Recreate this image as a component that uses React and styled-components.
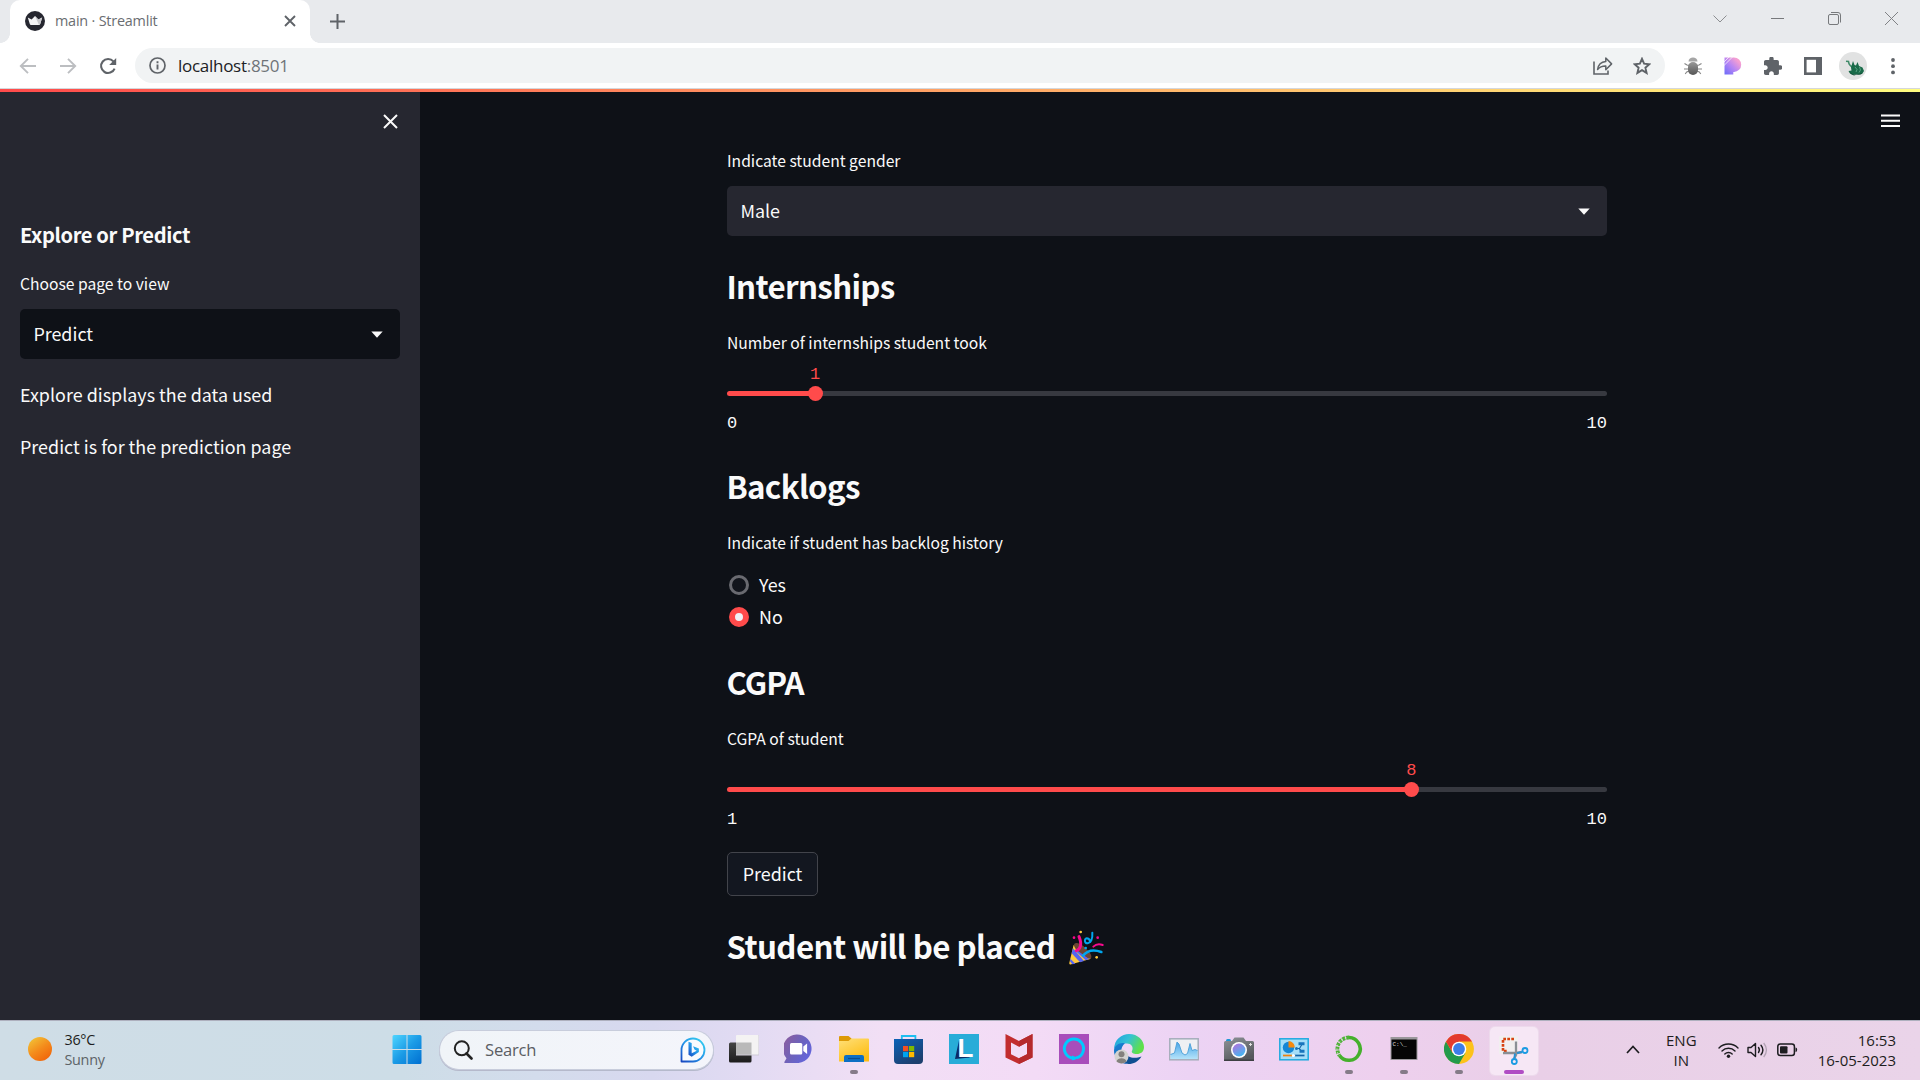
import React from "react";
import styled, { createGlobalStyle } from "styled-components";

const SOURCE = '"Noto Sans CJK SC", "Open Sans", sans-serif';
const SYSTEM = '"Open Sans", "Noto Sans", sans-serif';
const CODE = '"Liberation Mono", monospace';

const Global = createGlobalStyle`
  * { box-sizing: border-box; }
  body { margin: 0; background: #0e1117; overflow: hidden; }
  svg { display: block; flex: none; }
  h1, h2, h3, p { margin: 0; }
`;

const Screen = styled.div`
  width: 1920px;
  height: 1080px;
  display: flex;
  flex-direction: column;
  font-family: ${SYSTEM};
`;

/* ---------- browser chrome ---------- */
const TabStrip = styled.header`
  height: 43px;
  flex: none;
  background: #e8eaed;
  display: flex;
  align-items: stretch;
`;
const Flare = styled.div`
  width: 10px;
  background: radial-gradient(circle at ${(p) => (p.$right ? "100%" : "0")} 0, #e8eaed 9.6px, #fff 10.2px) bottom / 10px 10px no-repeat;
`;
const Tab = styled.div`
  width: 300px;
  background: #fff;
  border-radius: 10px 10px 0 0;
  display: flex;
  align-items: center;
  padding: 0 14px 0 15px;
  height: 43px;
`;
const TabTitle = styled.span`
  flex: 1;
  margin: -2px 0 0 10px;
  font-size: 14.4px;
  line-height: 20px;
  letter-spacing: -0.2px;
  color: #6a6d71;
`;
const TabIcon = styled.div`
  margin-top: -1px;
`;
const NewTab = styled.div`
  padding: 14px 0 0 10px;
  flex: 1;
`;
const WindowButtons = styled.div`
  display: flex;
  padding-right: 0;
`;
const WindowButton = styled.div`
  width: 57.2px;
  height: 37px;
  display: grid;
  place-items: center;
`;
const Toolbar = styled.div`
  height: 46px;
  flex: none;
  background: #fff;
  border-bottom: 1px solid #d5d7db;
  display: flex;
  align-items: center;
`;
const NavButtons = styled.nav`
  display: flex;
  padding-left: 7.5px;
  width: 135px;
`;
const NavButton = styled.div`
  width: 40px;
  display: grid;
  place-items: center;
`;
const Omnibox = styled.div`
  width: 1530px;
  height: 35px;
  border-radius: 18px;
  background: #f1f3f4;
  display: flex;
  align-items: center;
  padding: 0 14px 0 14px;
`;
const Url = styled.span`
  flex: 1;
  margin-left: 12px;
  font-size: 17px;
  line-height: 24px;
  letter-spacing: -0.28px;
  color: #202124;
`;
const Port = styled.span`
  color: #6f7378;
`;
const OmniActions = styled.div`
  display: flex;
  align-items: center;
  gap: 20px;
`;
const Extensions = styled.div`
  display: flex;
  padding-left: 8px;
`;
const Extension = styled.div`
  width: 40px;
  display: grid;
  place-items: center;
`;

/* ---------- application ---------- */
const Decoration = styled.div`
  height: 3px;
  flex: none;
  background: linear-gradient(90deg, #ff4b4b, #fffd80);
`;
const AppBody = styled.div`
  height: 928px;
  flex: none;
  display: flex;
  background: #0e1117;
  color: #fafafa;
  font-family: ${SOURCE};
`;
const Sidebar = styled.aside`
  width: 420px;
  background: #262730;
  padding: 22px 20px 0;
  display: flex;
  flex-direction: column;
`;
const CloseRow = styled.div`
  display: flex;
  justify-content: flex-end;
  padding-right: 2px;
  height: 106px;
`;
const SideTitle = styled.h3`
  font-size: 20.1px;
  font-weight: 700;
  line-height: 29px;
  letter-spacing: -0.37px;
  margin-bottom: 23px;
`;
const Label = styled.div`
  font-size: 15.67px;
  line-height: 23px;
  white-space: nowrap;
`;
const SelectBox = styled.div`
  height: 50px;
  margin-top: ${(p) => p.$gap}px;
  border-radius: 5px;
  background: ${(p) => p.$bg};
  display: flex;
  align-items: center;
  justify-content: space-between;
  padding: 0 17.5px 0 13.4px;
`;
const Body = styled.span`
  font-size: 17.9px;
  line-height: 26px;
  padding-bottom: 2px;
`;
const Paragraph = styled.p`
  font-size: 17.9px;
  line-height: 26px;
  letter-spacing: 0.015px;
  margin-top: ${(p) => p.$gap}px;
`;
const Main = styled.main`
  flex: 1;
  display: flex;
  justify-content: space-between;
  padding: 22px 20px 0 307px;
`;
const Form = styled.section`
  width: 880px;
  padding-top: 35px;
`;
const Heading = styled.h2`
  display: flex;
  font-size: 31.3px;
  font-weight: 700;
  line-height: 45px;
  letter-spacing: ${(p) => p.$ls}px;
  margin-top: ${(p) => p.$gap}px;
  margin-left: -0.6px;
  margin-bottom: ${(p) => p.$after || 0}px;
`;
const SliderBox = styled.div`
  height: 79px;
  padding-top: 10px;
  font-family: ${CODE};
  font-size: 17px;
  line-height: 20px;
`;
const Rail = styled.div`
  height: 5px;
  margin-top: 27px;
  border-radius: 3px;
  background: linear-gradient(90deg, #ff4b4b ${(p) => p.$pct}%, #373940 ${(p) => p.$pct}%);
  position: relative;
`;
const Thumb = styled.div`
  position: absolute;
  left: ${(p) => p.$pct}%;
  top: -5px;
  width: 15px;
  height: 15px;
  margin-left: -7.5px;
  border-radius: 50%;
  background: #ff4b4b;
`;
const ThumbValue = styled.div`
  position: absolute;
  left: 50%;
  bottom: 16px;
  transform: translateX(-50%);
  color: #ff4b4b;
`;
const Ticks = styled.div`
  display: flex;
  justify-content: space-between;
  margin-top: 18px;
`;
const Radios = styled.div`
  padding-top: 15px;
`;
const RadioRow = styled.div`
  height: 32px;
  display: flex;
  align-items: center;
  padding-left: 2px;
  gap: 10px;
`;
const Dot = styled.div`
  width: 20px;
  height: 20px;
  border-radius: 50%;
  border: ${(p) => (p.$on ? "6px solid #ff4b4b" : "3px solid #696a70")};
  background: ${(p) => (p.$on ? "#f0f2f6" : "#12151c")};
`;
const Button = styled.div`
  width: 91px;
  height: 44px;
  margin-top: 23px;
  border: 1px solid #42444b;
  border-radius: 5px;
  background: #131720;
  display: flex;
  align-items: center;
  justify-content: center;
`;
const Party = styled.div`
  padding: 7px 0 0 14px;
`;

/* ---------- taskbar ---------- */
const Taskbar = styled.footer`
  height: 60px;
  flex: none;
  border-top: 1px solid #aeb0be;
  background: linear-gradient(92deg, #cfdde6 0, #cddde7 21%, #d3dcec 28%, #d8d8ef 34%, #e2dbf3 39%, #f2dff5 46%, #f3dbf6 54%, #ecd3f4 62%, #eed0ee 72%, #e9cfe7 80%, #ead4e9 100%);
  display: flex;
  align-items: center;
`;
const Weather = styled.div`
  width: 379px;
  display: flex;
  align-items: center;
  padding-left: 28px;
  gap: 12.5px;
`;
const Sun = styled.div`
  width: 24px;
  height: 24px;
  border-radius: 50%;
  margin-top: -3px;
  background: linear-gradient(145deg, #f2bf35 10%, #f48b1b 50%, #f0640a 90%);
`;
const Lines = styled.div`
  display: flex;
  flex-direction: column;
  align-items: ${(p) => p.$align || "flex-start"};
  font-size: ${(p) => p.$size || 14.4}px;
  line-height: 20px;
  letter-spacing: ${(p) => p.$ls || 0}px;
  color: #1d1d20;
  padding-bottom: 2px;
`;
const Soft = styled.span`
  color: #5d6367;
`;
const Cell = styled.div`
  width: 55px;
  height: 48px;
  display: flex;
  flex-direction: column;
  align-items: center;
  padding-top: ${(p) => (p.$tile ? 8 : 7)}px;
  padding-bottom: 0;
  gap: ${(p) => (p.$tile ? 5 : 6)}px;
`;
const Tile = styled(Cell)`
  width: 48px;
  margin-left: 4px;
  border-radius: 5px;
  background: #f6e7f5;
  box-shadow: 0 0 0 1px #eddaec;
`;
const Running = styled.div`
  width: ${(p) => (p.$active ? 20 : 8)}px;
  height: 4px;
  border-radius: 2px;
  background: ${(p) => (p.$active ? "#b04cc4" : "#857b88")};
`;
const Search = styled.div`
  width: 273px;
  height: 38px;
  margin: 0 3px 1px 6px;
  border-radius: 20px;
  background: linear-gradient(90deg, #f0f4f8, #f4f5fb);
  box-shadow: 0 0 0 1px #c8cddc, 0 1px 0 1px #b5b9cb;
  display: flex;
  align-items: center;
  padding: 0 7px 0 13px;
`;
const SearchText = styled.span`
  flex: 1;
  margin-left: 12px;
  font-size: 16.6px;
  line-height: 24px;
  letter-spacing: -0.2px;
  color: #5b5d63;
`;
const Tray = styled.div`
  flex: 1;
  display: flex;
  align-items: center;
  padding-right: 24px;
`;
const Chevron = styled.div`
  margin: 0 26px 2px 88px;
`;
const StatusIcons = styled.div`
  display: flex;
  align-items: center;
  gap: 8px;
  margin: 0 0 2px 21px;
  flex: 1;
`;

/* ---------- icons ---------- */
const S = ({ w = 30, h = w, vb, children, ...p }) => (
  <svg width={w} height={h} viewBox={vb || `0 0 ${w} ${h}`} fill="none" {...p}>{children}</svg>
);

const Crown = () => (
  <S w={20}>
    <circle cx="10" cy="10" r="10" fill="#262730" />
    <path d="M2.8 6.500 6.600 8.500 10 5 13.400 8.500l3.800-2-2 6.500c-.2.700-.6 1-1.200 1H6c-.6 0-1-.3-1.200-1z" fill="#f4f4f6" />
    <path d="M10 5 13.400 8.500l3.800-2-2 6.500c-.2.700-.6 1-1.200 1z" fill="#c9c9cd" />
  </S>
);
const X = ({ w, c, t }) => (
  <S w={w}><path d={`M1 1 ${w - 1} ${w - 1}M${w - 1} 1 1 ${w - 1}`} stroke={c} strokeWidth={t} /></S>
);
const Arrow = ({ flip }) => (
  <S w={18}>
    <path d={flip ? "M1 9h15M9 1.800 16.200 9 9 16.200" : "M17 9H2M9 1.800 1.800 9 9 16.200"} stroke="#bcbec1" strokeWidth="1.900" />
  </S>
);
const Reload = () => (
  <S w={18}>
    <path d="M15.600 11.600A7 7 0 1 1 14.400 4.400L16 6" stroke="#5f6368" strokeWidth="2.100" />
    <path d="M17.200 1v7h-7z" fill="#5f6368" />
  </S>
);
const Info = () => (
  <S w={17}>
    <circle cx="8.500" cy="8.500" r="7.500" stroke="#5f6368" strokeWidth="1.700" />
    <path d="M8.500 7.600v5M8.500 4.300v2" stroke="#5f6368" strokeWidth="1.900" />
  </S>
);
const Share = () => (
  <S w={20}>
    <path d="M1 5.500V18h14v-3.400" stroke="#5f6368" strokeWidth="1.600" />
    <path d="M12.800 2v3.600C8 6 5.200 9 4.600 13.600c2-2.500 4.500-3.600 8.200-3.500v3.700l5.800-5.900z" stroke="#5f6368" strokeWidth="1.500" strokeLinejoin="round" />
  </S>
);
const Star = () => (
  <S w={18}>
    <path d="m9 1.800 2.100 4.900 5.300.5-4 3.500 1.200 5.200L9 13.100l-4.600 2.800 1.200-5.200-4-3.500 5.300-.5z" stroke="#5f6368" strokeWidth="1.900" />
  </S>
);
const Bug = () => (
  <S w={18}>
    <defs><linearGradient id="bug" x2="0" y2="1"><stop stopColor="#999" /><stop offset="1" stopColor="#555" /></linearGradient></defs>
    <path d="M.5 6.500 3 8l2 .4M0 12h5M1.200 17l1.500-2 2.500-1M17.500 6.500 15 8l-2 .4M18 12h-5M16.800 17l-1.500-2-2.500-1" stroke="#858585" strokeWidth="1.100" />
    <path d="M4.500 4.600C4.500-1 13.500-1 13.500 4.600z" fill="#a5a5a5" />
    <rect x="4" y="5" width="10" height="13" rx="5" fill="url(#bug)" />
  </S>
);
const PinkP = () => (
  <S w={18}>
    <defs><linearGradient id="pp" x1="1" y1="0" x2="0" y2="1"><stop offset=".2" stopColor="#f59fd2" /><stop offset=".55" stopColor="#b685f5" /><stop offset="1" stopColor="#6a6cf8" /></linearGradient></defs>
    <path d="M.5.500h9.500a7.200 7.200 0 0 1 0 14.400H9.300V17.500H.5z" fill="url(#pp)" />
    <path d="M-.5 5.500 5.500-.5M-.5 9 8.500 0" stroke="#fff" strokeWidth="1" opacity=".7" />
  </S>
);
const Puzzle = () => (
  <S w={18} vb="2 1.500 20.500 20.500">
    <path d="M20.500 11H19V7c0-1.100-.9-2-2-2h-4V3.500a2.500 2.500 0 0 0-5 0V5H4c-1.100 0-1.990.9-1.990 2v3.800H3.500c1.490 0 2.700 1.210 2.700 2.700s-1.210 2.700-2.700 2.700H2V20c0 1.100.9 2 2 2h3.800v-1.500c0-1.490 1.210-2.700 2.700-2.700s2.700 1.210 2.700 2.700V22H17c1.100 0 2-.9 2-2v-4h1.500a2.500 2.500 0 0 0 0-5z" fill="#5f6368" />
  </S>
);
const Panel = () => (
  <S w={18}><rect width="18" height="18" fill="#5f6368" /><rect x="2.600" y="2.800" width="9.400" height="12.600" fill="#fff" /></S>
);
const Avatar = () => (
  <S w={28}>
    <circle cx="14" cy="14" r="14" fill="#e1e2e2" />
    <path d="M7 9.200l2.500.3c.3 2.500 1.500 4.500 4 5.500" stroke="#3f8a68" strokeWidth="1.600" />
    <path d="m12 15.500 2-6.500 1.500 4 1.500.500 1.500-3.500 1.500 4 3.500 1.500 1.500 3.500-2 3-3.500.5-3-.5-2.500 1-3-1.500-1.500-2.500 3-.5z" fill="#1a6b4a" />
    <path d="m16 15 2 2.500-1 2.500M20.500 15l1 3-1.500 2.500" stroke="#6bb392" strokeWidth=".8" />
    <path d="m10 19.500 4 3 6-.5 4-1.500-2.500 2-4 .3-2.500.7-3-1.500z" fill="#0e4a33" />
  </S>
);
const Dots = () => (
  <S w={4} h={18}><g fill="#5f6368"><circle cx="2" cy="3" r="1.900" /><circle cx="2" cy="9.200" r="1.900" /><circle cx="2" cy="15.400" r="1.900" /></g></S>
);
const Caret = () => <S w={12} h={7}><path d="M.3.500h11.400L6 6.800z" fill="#fafafa" /></S>;

const PartyIcon = () => (
  <S w={35} vb="0 0 105 105">
    <path d="M15 46c0-12 18-7 31 5s27 27 19 35c-8 6-23-1-36-13S15 58 15 46z" fill="#6d4534" />
    <path d="M14 44 1 98c-1 4 2 6 6 5l59-17C51 88 19 64 14 44z" fill="#ffc83d" />
    <path d="m12 55 33 38-12 4L8 70zM4 86l15 15-9 2-7-9zM24 61l36 26-10 4-31-29z" fill="#5565f0" />
    <path d="M22 62c12-4 18-18 8-42" stroke="#f70a8d" strokeWidth="9" strokeLinecap="round" />
    <path d="M42 77C55 61 75 58 97 66" stroke="#00a6ed" strokeWidth="8" strokeLinecap="round" />
    <path d="M73 50q12-12 28-5" stroke="#f70a8d" strokeWidth="6" strokeLinecap="round" />
    <path d="M70 8c1 18-5 30-14 32-10 1-11-14-3-15 8 0 10 7 11 11" stroke="#00a6ed" strokeWidth="6" strokeLinecap="round" />
    <circle cx="50" cy="54" r="4" fill="#00a6ed" />
    <g fill="#f70a8d"><circle cx="15" cy="23" r="4" /><circle cx="86" cy="23" r="4" /></g>
    <g fill="#ffc83d"><circle cx="35" cy="6" r="4" /><circle cx="83" cy="82" r="4" /></g>
  </S>
);

const Windows = () => (
  <S>
    <defs><linearGradient id="win" x2="1" y2="1"><stop stopColor="#4fd5ff" /><stop offset=".5" stopColor="#1b9be6" /><stop offset="1" stopColor="#006fd1" /></linearGradient></defs>
    <path d="M2 1h12.500v14H.5V2.500Q.5 1 2 1zM15.500 1H28q1.500 0 1.500 1.500V15h-14zM.5 16h14v14H2q-1.500 0-1.500-1.500zM15.500 16h14v12.500Q29.500 30 28 30H15.500z" fill="url(#win)" />
  </S>
);
const Magnifier = () => (
  <S w={20}><circle cx="8.800" cy="8.300" r="7" stroke="#222" strokeWidth="2" /><path d="m13.500 13.500 5 5" stroke="#222" strokeWidth="2.600" strokeLinecap="round" /></S>
);
const Bing = () => (
  <S w={26}>
    <defs><linearGradient id="bing" x1="0" y1="1" x2=".9" y2="0"><stop stopColor="#1746c0" /><stop offset=".5" stopColor="#2493e8" /><stop offset="1" stopColor="#35d0f0" /></linearGradient></defs>
    <path d="M1.500 24.500V13A11.500 11.500 0 1 1 13 24.500z" stroke="url(#bing)" strokeWidth="1.800" fill="#f9fbfe" strokeLinejoin="round" />
    <path d="m8.500 4.800 3.200 1.300v10.100l5-2.500-2.200-1.300-1.400-3.200 5.800 2.300v3.600l-7.200 4.600-3.200-1.900z" fill="url(#bing)" />
  </S>
);
const TaskView = () => (
  <S>
    <defs><linearGradient id="tv" x2="0" y2="1"><stop stopColor="#454545" /><stop offset="1" stopColor="#1c1c1c" /></linearGradient></defs>
    <rect x="0" y="8.500" width="22.500" height="20" rx="1.500" fill="url(#tv)" />
    <rect x="7" y="1" width="23" height="20" rx="1" fill="#f4f3f3" />
    <path d="M7 8.500h15.500V21H7z" fill="#b9b9b9" />
    <path d="M7 21h23V1" stroke="#cfcbd6" />
  </S>
);
const Chat = () => (
  <S>
    <defs><linearGradient id="chat" x1="0" y1=".2" x2="1" y2=".8"><stop stopColor="#8b5da0" /><stop offset=".5" stopColor="#6c63bd" /><stop offset="1" stopColor="#6265e0" /></linearGradient></defs>
    <path d="M1 29c-.8 0-1-.8-.5-1.300l2-3.500A14.300 14.300 0 1 1 14.500 29z" fill="url(#chat)" />
    <rect x="6" y="9" width="12.300" height="11.500" rx="1.500" fill="#fff" /><path d="m19.300 12.500 3.800-3v10.500l-3.800-3z" fill="#fff" />
  </S>
);
const Folder = () => (
  <S>
    <defs><linearGradient id="fo" x2=".6" y2="1"><stop stopColor="#ffe07a" /><stop offset="1" stopColor="#fdbd13" /></linearGradient></defs>
    <path d="M0 3q0-1 1-1h8.500l3 2.500V9H0z" fill="#dd9a06" />
    <path d="M0 7h9.500l3-2.500H29q1 0 1 1v22H0z" fill="url(#fo)" />
    <path d="M5 28v-5q0-2 2-2h16q2 0 2 2v5z" fill="#0c6fc4" /><path d="M9 24.500h12" stroke="#084d91" strokeWidth="1.200" />
  </S>
);
const Store = () => (
  <S>
    <defs><linearGradient id="st" x2=".6" y2="1"><stop stopColor="#0b62b8" /><stop offset="1" stopColor="#1d3f6e" /></linearGradient></defs>
    <path d="M7.800 7V2h13.600v5" stroke="#1ebef0" strokeWidth="1.800" />
    <path d="M0 5h29v21q0 4-4 4H4q-4 0-4-4z" fill="url(#st)" />
    <path d="M9 12h5.200v5.200H9z" fill="#f25022" /><path d="M15 12h5.200v5.200H15z" fill="#7fba00" /><path d="M9 18h5.200v5.200H9z" fill="#00a4ef" /><path d="M15 18h5.200v5.200H15z" fill="#ffb900" />
  </S>
);
const Lenovo = () => (
  <S>
    <rect width="30" height="30" fill="#28acd8" />
    <path d="M10.500 4 6 25l15-1.500-9-5z" fill="#0b2a66" />
    <text x="8.500" y="23" fontFamily="Liberation Sans, sans-serif" fontWeight="700" fontSize="26" fill="#fff">L</text>
  </S>
);
const McAfee = () => (
  <S><path d="M1.500 0 15 7 28.500 0v23.500L15 30 1.500 23.500zM7 8.500v11.700l8 4 8-4V8.500l-8 4.300z" fill="#c22d2f" fillRule="evenodd" /><path d="M15 7 28.500 0v23.500L15 30v-5.800l8-4V8.500l-8 4.300z" fill="#b52a2d" /></S>
);
const Alexa = () => (
  <S><rect width="30" height="30" fill="#a84dbb" /><path d="M14 24.200a9.600 9.600 0 1 1 3.500-.3" stroke="#00caff" strokeWidth="3" /><path d="M13 21.500v4.800c3 0 6-1.800 7.500-4-2 .8-5 .8-7.500-.8z" fill="#00caff" /></S>
);
const Edge = () => (
  <S>
    <defs>
      <linearGradient id="e1" x2="1" y2=".4"><stop stopColor="#1f9fde" /><stop offset=".5" stopColor="#34c1d6" /><stop offset="1" stopColor="#5fe04a" /></linearGradient>
      <linearGradient id="e2" x2=".6" y2="1"><stop stopColor="#1a86d8" /><stop offset="1" stopColor="#0c59a8" /></linearGradient>
    </defs>
    <path d="M0 16C0 5 8 0 15 0c9 0 15 6.500 15 13 0 5-3.500 7-7 7-4 0-6-1.500-5-3 2-4-1-7.500-5-7.500C7 9.500 1 12 0 16z" fill="url(#e1)" />
    <path d="M0 16c1-5 6-8 11-6.500-3 2-4.500 6-3 10.500 2 6 8 8 14 6.500C16 32 4 31 .8 21 .2 19.500 0 18 0 16z" fill="url(#e2)" />
    <path d="M11.500 18c1 5 8 7.500 16 4.500-3 5-8 7.500-13 7.500-6-3-6-9-3-12z" fill="#0f4f92" />
    <circle cx="7.500" cy="22.500" r="7" fill="#d3d2d0" /><circle cx="7.500" cy="20.300" r="3" fill="#83807d" /><path d="M2.500 27.300c1-4 9-4 10 0-2.500 2.800-7.500 2.800-10 0z" fill="#83807d" />
  </S>
);
const Monitor = () => (
  <S>
    <defs><linearGradient id="mo" x2="0" y2="1"><stop stopColor="#46a5e8" /><stop offset="1" stopColor="#b5e3fa" /></linearGradient></defs>
    <rect x=".8" y="4.800" width="28.400" height="21" fill="#eef0f3" stroke="#a5adba" strokeWidth="1.500" />
    <path d="M1.500 20.500 5.500 19l2.500-11 2 2 3 9 3 2 2.500-1.500L21 9.500l2 7 3-1 2.500 1v8.500h-27z" fill="url(#mo)" />
    <path d="M1.500 20.500 5.500 19l2.500-11 2 2 3 9 3 2 2.500-1.500L21 9.500l2 7 3-1 2.500 1" stroke="#4b9fd8" strokeWidth=".9" />
  </S>
);
const Camera = () => (
  <S>
    <defs><linearGradient id="ca" x2=".5" y2="1"><stop stopColor="#8f9498" /><stop offset="1" stopColor="#55585c" /></linearGradient><linearGradient id="lens" x2=".6" y2="1"><stop stopColor="#ba6ddb" /><stop offset="1" stopColor="#46b5f1" /></linearGradient></defs>
    <path d="M2 6.500Q2 5 3.500 5h2Q7 5 7 6.500V8H2z" fill="#1f97d4" />
    <path d="M1.500 7H8l2.500-3.500h9L22 7h6.500Q30 7 30 8.500V27H0V8.500Q0 7 1.500 7z" fill="url(#ca)" /><path d="M0 25.500h30V27H0z" fill="#3d3f42" />
    <circle cx="15" cy="16" r="8" fill="#fff" /><circle cx="15" cy="16" r="6.400" fill="url(#lens)" /><path d="M25 10.500h3M26.500 9v3" stroke="#e3e3e3" />
  </S>
);
const Control = () => (
  <S>
    <rect x=".8" y="4.800" width="28.400" height="21" fill="#a5def8" stroke="#20aadf" strokeWidth="1.500" />
    <circle cx="9.500" cy="13.500" r="5.700" fill="#1587d6" /><path d="M9.500 13.500V7a6.300 6.300 0 0 1 6.300 6.500z" fill="#f7890e" />
    <path d="M17 14.500h3.500l3-5M20 14.500l3 3" stroke="#1566a8" strokeWidth="1.100" />
    <path d="M19.500 8.300h6v3h-6zM20.500 15.800h5v3h-5z" fill="#1975bd" /><circle cx="17.500" cy="14.500" r="1.500" fill="#1975bd" />
    <path d="M4 21.500h9" stroke="#ef820e" strokeWidth="1.700" /><path d="M14 21.500h11.500" stroke="#1566a8" strokeWidth="1.700" /><circle cx="14.500" cy="21.500" r="1.600" fill="#fff" />
  </S>
);
const Anaconda = () => (
  <S><path d="M15 3.500a11.400 11.400 0 1 1-9.500 18" stroke="#45b02c" strokeWidth="3.600" /><path d="M15 3.500A11.400 11.400 0 0 0 5.500 21.500" stroke="#4cb334" strokeWidth="3.800" strokeDasharray="3 .9" /><path d="M12.500 3.800A11.500 11.500 0 0 0 4 20" stroke="#eed0ee" strokeWidth=".8" strokeDasharray="1.800 2" /></S>
);
const Cmd = () => (
  <S><rect x="1.500" y="3" width="27" height="23" fill="#9a979b" /><rect x="2.500" y="5.500" width="25" height="19.500" fill="#050505" /><text x="3.500" y="11.500" fontFamily="Liberation Mono, monospace" fontSize="6" fill="#ddd">C:\_</text></S>
);
const Chrome = () => (
  <S>
    <circle cx="15" cy="15" r="14.900" fill="#fcc21b" />
    <path d="M2 7.500A15 15 0 0 0 15 30l6.500-11.200L8.500 18.800z" fill="#239a4b" />
    <path d="M2 7.500A15 15 0 0 1 28 7.500H15L8.500 18.800z" fill="#e33b2e" />
    <circle cx="15" cy="15" r="7.300" fill="#fff" /><circle cx="15" cy="15" r="5.900" fill="#3c7de8" />
  </S>
);
const Snip = () => (
  <S>
    <rect x="0" y="1" width="19" height="18" rx="1" fill="#f1efef" />
    <path d="M15 4H4v12h4" stroke="#d8420f" strokeWidth="2.600" strokeDasharray="2.700 1.300" />
    <path d="M17 6.500V20l-2 4M4 18h14l5-1" stroke="#8a8f95" strokeWidth="2.300" />
    <path d="M16 18.500 15.200 24M18 18l5-1" stroke="#2492d6" strokeWidth="1.800" />
    <circle cx="15.300" cy="26.500" r="2.500" stroke="#1a9be2" strokeWidth="1.800" /><circle cx="26" cy="15.500" r="2.500" stroke="#1a9be2" strokeWidth="1.800" />
  </S>
);
const Wifi = () => (
  <S w={21} h={18}>
    <path d="M1 7a13.400 13.400 0 0 1 19 0M4 10a9.200 9.200 0 0 1 13 0M6.800 13a5.200 5.200 0 0 1 7.400 0" stroke="#1d1d20" strokeWidth="1.400" strokeLinecap="round" /><circle cx="10.500" cy="15.300" r="1.700" fill="#1d1d20" />
  </S>
);
const Sound = () => (
  <S w={22} h={18}>
    <path d="M1 6.500h3L8.500 2.500v13L4 11.500H1z" stroke="#1d1d20" strokeWidth="1.400" strokeLinejoin="round" />
    <path d="M11.500 6.500q1.800 2.500 0 5M14 4.200q3.800 4.800 0 9.600" stroke="#1d1d20" strokeWidth="1.400" strokeLinecap="round" /><path d="M16.700 2q5.500 7 0 14" stroke="#b3a3b4" strokeWidth="1.300" />
  </S>
);
const Battery = () => (
  <S w={21} h={14}><rect x=".8" y="1" width="16.600" height="11.500" rx="2.500" stroke="#1d1d20" strokeWidth="1.500" /><rect x="3" y="3.200" width="7.500" height="7.200" rx="1" fill="#1d1d20" /><path d="M18.500 4.500q1.700 0 1.700 2.200t-1.700 2.200z" fill="#1d1d20" /></S>
);

/* ---------- composed parts ---------- */
const Select = ({ value, bg, gap }) => (
  <SelectBox $bg={bg} $gap={gap}><Body>{value}</Body><Caret /></SelectBox>
);
const Slider = ({ value, min, max }) => {
  const pct = ((value - min) / (max - min)) * 100;
  return (
    <SliderBox>
      <Rail $pct={pct}><Thumb $pct={pct}><ThumbValue>{value}</ThumbValue></Thumb></Rail>
      <Ticks><span>{min}</span><span>{max}</span></Ticks>
    </SliderBox>
  );
};

const APPS = [
  [TaskView], [Chat], [Folder, 1], [Store], [Lenovo], [McAfee], [Alexa], [Edge],
  [Monitor], [Camera], [Control], [Anaconda, 1], [Cmd, 1], [Chrome, 1],
];

export default function App() {
  return (
    <Screen>
      <Global />
      <TabStrip>
        <Flare />
        <Tab>
          <TabIcon><Crown /></TabIcon>
          <TabTitle>main · Streamlit</TabTitle>
          <TabIcon><X w={12} c="#5f6368" t={1.9} /></TabIcon>
        </Tab>
        <Flare $right />
        <NewTab>
          <S w={15}><path d="M7.500 0v15M0 7.500h15" stroke="#5f6368" strokeWidth="2" /></S>
        </NewTab>
        <WindowButtons>
          <WindowButton><S w={14} h={8}><path d="m.5.500 6.500 6.500L13.500.5" stroke="#8c8e91" /></S></WindowButton>
          <WindowButton><S w={13} h={1}><path d="M0 .5h13" stroke="#77797c" /></S></WindowButton>
          <WindowButton><S w={13}><rect x=".5" y="2.500" width="10" height="10" rx="1.500" stroke="#77797c" /><path d="M3 .5h7q2.500 0 2.500 2.500v7.500" stroke="#77797c" /></S></WindowButton>
          <WindowButton><S w={13}><path d="m0 0 13 13M13 0 0 13" stroke="#808285" /></S></WindowButton>
        </WindowButtons>
      </TabStrip>
      <Toolbar>
        <NavButtons>
          <NavButton><Arrow /></NavButton>
          <NavButton><Arrow flip /></NavButton>
          <NavButton><Reload /></NavButton>
        </NavButtons>
        <Omnibox>
          <Info />
          <Url>localhost<Port>:8501</Port></Url>
          <OmniActions><Share /><Star /></OmniActions>
        </Omnibox>
        <Extensions>
          {[Bug, PinkP, Puzzle, Panel, Avatar, Dots].map((Icon, i) => <Extension key={i}><Icon /></Extension>)}
        </Extensions>
      </Toolbar>

      <Decoration />
      <AppBody>
        <Sidebar>
          <CloseRow><X w={15} c="#fafafa" t={2} /></CloseRow>
          <SideTitle>Explore or Predict</SideTitle>
          <Label>Choose page to view</Label>
          <Select value="Predict" bg="#0e1117" gap={14} />
          <Paragraph $gap={22}>Explore displays the data used</Paragraph>
          <Paragraph $gap={26}>Predict is for the prediction page</Paragraph>
        </Sidebar>
        <Main>
          <Form>
            <Label>Indicate student gender</Label>
            <Select value="Male" bg="#262730" gap={14} />
            <Heading $gap={27} $after={23} $ls={-0.66}>Internships</Heading>
            <Label>Number of internships student took</Label>
            <Slider value={1} min={0} max={10} />
            <Heading $gap={30} $after={23} $ls={-0.68}>Backlogs</Heading>
            <Label>Indicate if student has backlog history</Label>
            <Radios>
              <RadioRow><Dot /><Body>Yes</Body></RadioRow>
              <RadioRow><Dot $on /><Body>No</Body></RadioRow>
            </Radios>
            <Heading $gap={26} $after={23} $ls={-0.9}>CGPA</Heading>
            <Label>CGPA of student</Label>
            <Slider value={8} min={1} max={10} />
            <Button><Body>Predict</Body></Button>
            <Heading $gap={27} $ls={-0.57}>Student will be placed<Party><PartyIcon /></Party></Heading>
          </Form>
          <S w={19} h={14}><path d="M0 1.500h19M0 6.700h19M0 12h19" stroke="#fafafa" strokeWidth="2" /></S>
        </Main>
      </AppBody>

      <Taskbar>
        <Weather>
          <Sun />
          <Lines $ls={-0.3}><span>36°C</span><Soft>Sunny</Soft></Lines>
        </Weather>
        <Cell><Windows /></Cell>
        <Search><Magnifier /><SearchText>Search</SearchText><Bing /></Search>
        {APPS.map(([Icon, running], i) => (
          <Cell key={i}><Icon />{running && <Running />}</Cell>
        ))}
        <Tile $tile><Snip /><Running $active /></Tile>
        <Tray>
          <Chevron><S w={14} h={9}><path d="m1 8 6-6.500L13 8" stroke="#1d1d20" strokeWidth="1.700" /></S></Chevron>
          <Lines $align="center" $size={15}><span>ENG</span><span>IN</span></Lines>
          <StatusIcons><Wifi /><Sound /><Battery /></StatusIcons>
          <Lines $align="flex-end" $size={15}><span>16:53</span><span>16-05-2023</span></Lines>
        </Tray>
      </Taskbar>
    </Screen>
  );
}
